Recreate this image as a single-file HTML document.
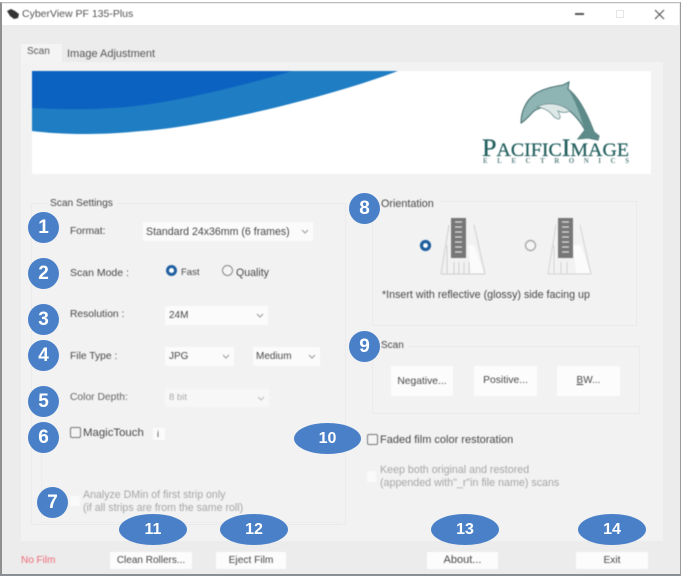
<!DOCTYPE html>
<html>
<head>
<meta charset="utf-8">
<style>
html,body{margin:0;padding:0;background:#fff;}
#root{position:relative;width:696px;height:579px;overflow:hidden;background:#fff;font-family:"Liberation Sans",sans-serif;font-size:10.5px;color:#484848;}
.a{position:absolute;}
.t{position:absolute;white-space:nowrap;filter:blur(.6px);line-height:12px;}
.dis{color:#a6a6a6;}
.sel,.btn{position:absolute;background:#fbfbfb;box-sizing:border-box;filter:blur(.6px);}
.sel span{position:absolute;left:4px;top:3px;white-space:nowrap;line-height:12px;}
.sel svg{position:absolute;right:4px;top:7px;}
.btn{text-align:center;background:#fcfcfc;line-height:18px;color:#484848;}
.c{position:absolute;background:#4a80c8;color:#fff;border-radius:50%;text-align:center;font-weight:bold;font-size:19px;font-family:"Liberation Sans",sans-serif;}
.gb{position:absolute;border:1px solid #ebebeb;box-sizing:border-box;}
.cb{position:absolute;width:11px;height:11px;border:1px solid #777;border-radius:2px;box-sizing:border-box;background:#f4f4f4;filter:blur(.45px);}
</style>
</head>
<body>
<div id="root">
  <!-- window -->
  <div class="a" style="left:0;top:2px;width:681px;height:574px;background:#ececec;border-right:1px solid #9a9a9a;border-left:2px solid #8f8f8f;border-top:1px solid #bdbdbd;border-bottom:2px solid #8a8f96;box-sizing:border-box;"></div>
  <div class="a" style="left:2px;top:4px;width:677px;height:21px;background:#fff;"></div>
  <svg class="a" style="left:6px;top:9px;filter:blur(.5px)" width="14" height="11" viewBox="0 0 14 11"><path d="M1 2 L5 0 L9 2 L13 5 L12 9 L8 10 L4 7 Z" fill="#333"/></svg>
  <div class="t" style="left:22px;top:8px;font-size:10.5px;color:#555;">CyberView PF 135-Plus</div>
  <div class="a" style="left:575px;top:13px;width:9px;height:1.5px;background:#555;filter:blur(.4px)"></div>
  <div class="a" style="left:616px;top:10px;width:8px;height:8px;border:1px solid #e6e6e6;box-sizing:border-box;"></div>
  <svg class="a" style="left:654px;top:9px;filter:blur(.4px)" width="11" height="11" viewBox="0 0 11 11"><path d="M1 1 L10 10 M10 1 L1 10" stroke="#555" stroke-width="1.2" fill="none"/></svg>

  <!-- tab panel -->
  <div class="a" style="left:21px;top:62px;width:642px;height:479px;background:#f2f2f2;"></div>
  <div class="a" style="left:21px;top:44px;width:41px;height:19px;background:#f4f4f4;"></div>
  <div class="t" style="left:27px;top:46px;font-size:10px;color:#555;">Scan</div>
  <div class="t" style="left:67px;top:48px;font-size:11px;color:#555;">Image Adjustment</div>

  <!-- banner -->
  <svg class="a" style="left:32px;top:71px;filter:blur(.5px)" width="619" height="103" viewBox="0 0 619 103">
    <rect width="619" height="103" fill="#fff"/>
    <path d="M0 0 H366 C300 25 180 55 110 60 C60 65 25 63 0 60 Z" fill="#1e7dc3"/>
    <path d="M0 0 H260 C210 15 130 35 80 37 C50 39 20 38 0 37 Z" fill="#0b62c1"/>
    <!-- dolphin -->
    <path d="M489 52 C489 42 493 30 503 23 C512 17 524 15 531 14 L537 11 L536 18 C547 26 556 45 562 61 L567 65 L566 69 L556 67 L546 68 L553 59 C548 50 542 42 532 36 C522 33 508 36 502 40 C497 45 493 50 489 52 Z" fill="#8fb4b4" stroke="#4a7372" stroke-width="1.1"/>
    <path d="M536 18 C547 26 556 45 562 61 L567 65 L566 69 L556 67 L546 68 L553 59 C549 48 545 32 536 18 Z" fill="#5d8b8a"/>
    <path d="M505 36 C516 30 530 33 538 40 C534 42 530 42 526 40 C530 48 528 50 522 46 C518 40 512 37 505 36 Z" fill="#dde7e6" stroke="#6d8f8e" stroke-width=".8"/>
    <text x="450" y="85" font-family="Liberation Serif,serif" font-size="25" fill="#24605f" stroke="#24605f" stroke-width=".25" textLength="147" lengthAdjust="spacingAndGlyphs">P<tspan font-size="19">ACIFIC</tspan>I<tspan font-size="19">MAGE</tspan></text>
    <text x="451" y="92" font-family="Liberation Serif,serif" font-weight="bold" font-size="7" fill="#5f8584" textLength="146" lengthAdjust="spacing">ELECTRONICS</text>
  </svg>

  <!-- Scan settings group -->
  <div class="gb" style="left:31px;top:203px;width:315px;height:322px;border-color:#ebebeb;"></div>
  <div class="a" style="left:47px;top:198px;width:70px;height:10px;background:#f2f2f2;"></div>
  <div class="t" style="left:50px;top:198px;font-size:10.2px;">Scan Settings</div>

  <div class="t" style="left:70px;top:226px;font-size:10.3px;">Format:</div>
  <div class="sel" style="left:143px;top:222px;width:170px;height:19px;"><span style="font-size:10.6px;left:3px;top:4px;">Standard 24x36mm (6 frames)</span><svg width="8" height="5" viewBox="0 0 8 5"><path d="M1 1 L4 4 L7 1" stroke="#999" fill="none"/></svg></div>

  <div class="t" style="left:70px;top:267px;font-size:10.5px;">Scan Mode :</div>
  <svg class="a" style="left:165px;top:264px;filter:blur(.5px)" width="13" height="13"><circle cx="6.5" cy="6.5" r="4" fill="#fff" stroke="#1f5f9f" stroke-width="3"/></svg>
  <div class="t" style="left:181px;top:267px;font-size:9.5px;">Fast</div>
  <svg class="a" style="left:221px;top:264px;filter:blur(.5px)" width="13" height="13"><circle cx="6.5" cy="6.5" r="5" fill="#f5f5f5" stroke="#888" stroke-width="1"/></svg>
  <div class="t" style="left:236px;top:267px;font-size:10.6px;">Quality</div>

  <div class="t" style="left:70px;top:309px;font-size:10.3px;">Resolution :</div>
  <div class="sel" style="left:165px;top:306px;width:103px;height:19px;"><span style="left:4px;top:4px;font-size:10px;">24M</span><svg width="8" height="5" viewBox="0 0 8 5"><path d="M1 1 L4 4 L7 1" stroke="#999" fill="none"/></svg></div>

  <div class="t" style="left:70px;top:351px;font-size:10.3px;">File Type :</div>
  <div class="sel" style="left:165px;top:347px;width:69px;height:19px;"><span style="left:4px;top:4px;font-size:10px;">JPG</span><svg width="8" height="5" viewBox="0 0 8 5"><path d="M1 1 L4 4 L7 1" stroke="#999" fill="none"/></svg></div>
  <div class="sel" style="left:253px;top:347px;width:67px;height:19px;"><span style="left:3px;top:4px;font-size:10px;">Medium</span><svg width="8" height="5" viewBox="0 0 8 5"><path d="M1 1 L4 4 L7 1" stroke="#999" fill="none"/></svg></div>

  <div class="t" style="left:70px;top:392px;font-size:10.3px;color:#666;">Color Depth:</div>
  <div class="sel" style="left:165px;top:389px;width:104px;height:18px;background:#f7f7f7;color:#aaa;"><span style="left:4px;font-size:9.5px;">8 bit</span><svg width="8" height="5" viewBox="0 0 8 5"><path d="M1 1 L4 4 L7 1" stroke="#bbb" fill="none"/></svg></div>

  <div class="cb" style="left:70px;top:427px;"></div>
  <div class="t" style="left:83px;top:427px;font-size:11.4px;">MagicTouch</div>
  <div class="sel" style="left:153px;top:428px;width:12px;height:12px;"><span style="left:4px;top:0;font-size:9px;">i</span></div>

  <div class="gb" style="left:41px;top:450px;width:300px;height:73px;border-color:#ededed;border-top-color:#f2f2f2;border-right-color:#f2f2f2;"></div>
  <div class="a" style="left:70px;top:496px;width:10px;height:10px;background:#fafafa;filter:blur(.5px)"></div>
  <div class="t dis" style="left:83px;top:489px;font-size:10.6px;line-height:13px;">Analyze DMin of first strip only<br>(if all strips are from the same roll)</div>

  <!-- Orientation -->
  <div class="gb" style="left:372px;top:201px;width:265px;height:125px;"></div>
  <div class="a" style="left:378px;top:196px;width:62px;height:10px;background:#f2f2f2;"></div>
  <div class="t" style="left:381px;top:198px;font-size:10.8px;">Orientation</div>
  <svg class="a" style="left:418px;top:238px;filter:blur(.6px)" width="15" height="15"><circle cx="7.5" cy="7.5" r="4" fill="#fff" stroke="#1f5f9f" stroke-width="3.2"/></svg>
  <svg class="a" style="left:523px;top:238px;filter:blur(.5px)" width="15" height="15"><circle cx="7.5" cy="7.5" r="5" fill="#f5f5f5" stroke="#aaa" stroke-width="1.4"/></svg>
  <svg class="a" style="left:438px;top:215px;filter:blur(.6px)" width="50" height="62" viewBox="0 0 50 62">
    <path d="M3 59 L11 10 M47 59 L36 10 M3 59 H47 M9 30 V59 M16 47 V59 M21 47 V59 M26 47 V59 M31 47 V59" stroke="#cfcfcf" fill="none"/>
    <path d="M30 30 L33 58 H46 L36 30 Z" fill="#fff" opacity=".7"/>
    <rect x="13" y="3" width="15" height="40" fill="#777"/>
    <path d="M17 7 H24 M17 12 H24 M17 17 H24 M17 22 H24 M17 27 H24 M17 32 H24 M17 37 H24" stroke="#ddd" stroke-width="1.2"/>
  </svg>
  <svg class="a" style="left:547px;top:215px;filter:blur(.6px)" width="46" height="62" viewBox="0 0 46 62">
    <path d="M1 59 L9 10 M44 59 L33 10 M1 59 H44 M7 30 V59 M14 47 V59 M20 47 V59" stroke="#d4d4d4" fill="none"/>
    <path d="M26 30 L29 58 H43 L34 30 Z" fill="#fff" opacity=".7"/>
    <rect x="11" y="3" width="15" height="40" fill="#777"/>
    <path d="M15 7 H22 M15 12 H22 M15 17 H22 M15 22 H22 M15 27 H22 M15 32 H22 M15 37 H22" stroke="#ddd" stroke-width="1.2"/>
  </svg>
  <div class="t" style="left:382px;top:289px;font-size:10.7px;">*Insert with reflective (glossy) side facing up</div>

  <!-- Scan -->
  <div class="gb" style="left:372px;top:346px;width:268px;height:68px;"></div>
  <div class="a" style="left:378px;top:341px;width:30px;height:10px;background:#f2f2f2;"></div>
  <div class="t" style="left:381px;top:340px;font-size:10px;">Scan</div>
  <div class="btn" style="left:391px;top:366px;width:62px;height:30px;line-height:32px;font-size:10.3px;">Negative...</div>
  <div class="btn" style="left:474px;top:366px;width:63px;height:30px;line-height:30px;font-size:10.3px;">Positive...</div>
  <div class="btn" style="left:557px;top:366px;width:63px;height:30px;line-height:30px;font-size:10px;"><u>B</u>W...</div>

  <div class="cb" style="left:367px;top:434px;"></div>
  <div class="t" style="left:380px;top:434px;font-size:11px;">Faded film color restoration</div>
  <div class="a" style="left:367px;top:471px;width:9px;height:11px;background:#fafafa;filter:blur(.5px)"></div>
  <div class="t dis" style="left:380px;top:464px;font-size:10.7px;line-height:13px;">Keep both original and restored<br>(appended with"_r"in file name) scans</div>

  <!-- bottom strip -->
  <div class="a" style="left:2px;top:541px;width:677px;height:32px;background:#ececec;"></div>
  <div class="t" style="left:21px;top:555px;font-size:10px;color:#ef6a78;">No Film</div>
  <div class="btn" style="left:110px;top:552px;width:82px;height:17px;line-height:17px;font-size:10px;">Clean Rollers...</div>
  <div class="btn" style="left:216px;top:552px;width:70px;height:17px;line-height:17px;font-size:10.2px;">Eject Film</div>
  <div class="btn" style="left:427px;top:552px;width:71px;height:17px;line-height:17px;font-size:11px;">About...</div>
  <div class="btn" style="left:576px;top:552px;width:72px;height:17px;line-height:17px;font-size:10.2px;">Exit</div>

  <!-- numbered callouts -->
  <div class="c" style="left:28px;top:212px;width:31px;height:31px;line-height:32px;">1</div>
  <div class="c" style="left:28px;top:258px;width:31px;height:31px;line-height:32px;">2</div>
  <div class="c" style="left:28px;top:304px;width:31px;height:31px;line-height:32px;">3</div>
  <div class="c" style="left:28px;top:340px;width:31px;height:31px;line-height:32px;">4</div>
  <div class="c" style="left:28px;top:386px;width:31px;height:31px;line-height:32px;">5</div>
  <div class="c" style="left:28px;top:422px;width:31px;height:31px;line-height:32px;">6</div>
  <div class="c" style="left:37px;top:487px;width:31px;height:31px;line-height:32px;">7</div>
  <div class="c" style="left:349px;top:193px;width:31px;height:31px;line-height:32px;">8</div>
  <div class="c" style="left:349px;top:331px;width:31px;height:31px;line-height:32px;">9</div>
  <div class="c" style="left:294px;top:423px;width:67px;height:31px;line-height:32px;font-size:16px;">10</div>
  <div class="c" style="left:119px;top:514px;width:68px;height:31px;line-height:32px;font-size:16px;">11</div>
  <div class="c" style="left:220px;top:514px;width:68px;height:31px;line-height:32px;font-size:16px;">12</div>
  <div class="c" style="left:431px;top:514px;width:68px;height:31px;line-height:32px;font-size:16px;">13</div>
  <div class="c" style="left:578px;top:514px;width:68px;height:31px;line-height:32px;font-size:16px;">14</div>
</div>
</body>
</html>
